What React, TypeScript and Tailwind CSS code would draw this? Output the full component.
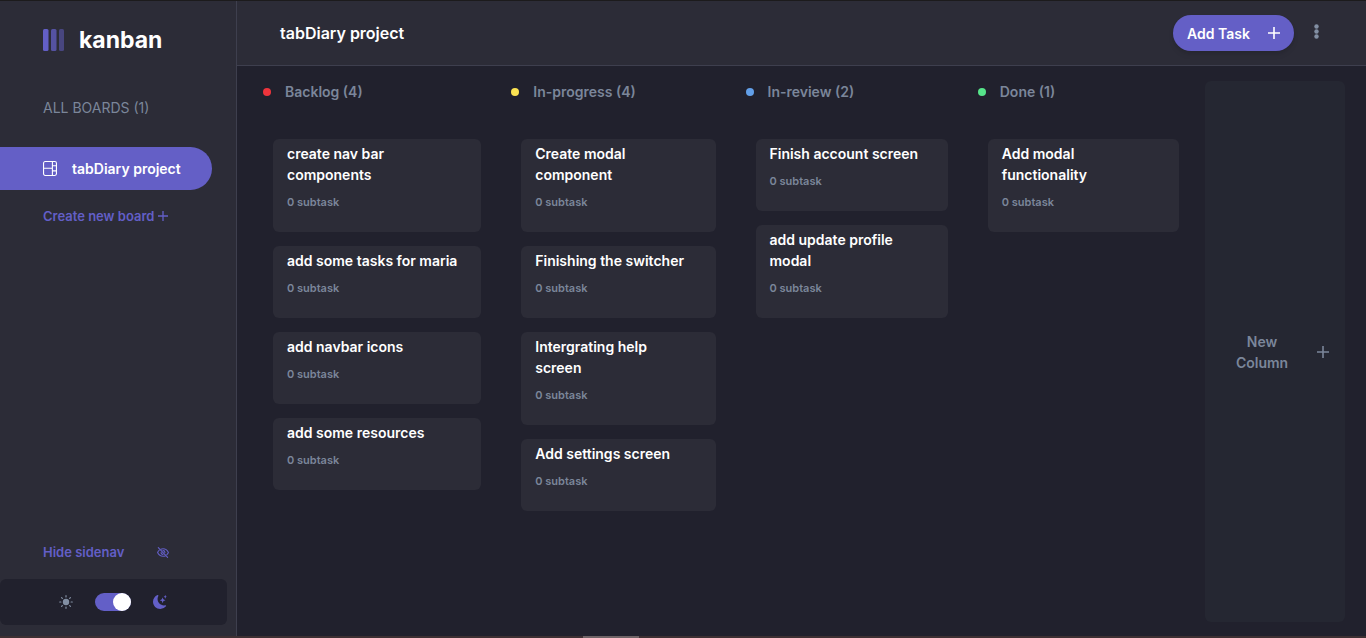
import { useState } from "react";
import { BsMoonStarsFill } from "react-icons/bs";

type Task = { title: string; subtasks: number };
type Column = { name: string; dot: string; tasks: Task[] };

const task = (title: string): Task => ({ title, subtasks: 0 });

const columns: Column[] = [
  {
    name: "Backlog",
    dot: "bg-[#ee343c]",
    tasks: [
      task("create nav bar components"),
      task("add some tasks for maria"),
      task("add navbar icons"),
      task("add some resources"),
    ],
  },
  {
    name: "In-progress",
    dot: "bg-[#fbe252]",
    tasks: [
      task("Create modal component"),
      task("Finishing the switcher"),
      task("Intergrating help screen"),
      task("Add settings screen"),
    ],
  },
  {
    name: "In-review",
    dot: "bg-[#629fe8]",
    tasks: [task("Finish account screen"), task("add update profile modal")],
  },
  { name: "Done", dot: "bg-[#56e48a]", tasks: [task("Add modal functionality")] },
];

function PlusIcon({ className }: { className: string }) {
  return (
    <svg viewBox="0 0 12 12" className={className} fill="currentColor" aria-hidden="true">
      <path d="M5.2 0h1.6v5.2H12v1.6H6.8V12H5.2V6.8H0V5.2h5.2z" />
    </svg>
  );
}

function BoardIcon() {
  return (
    <svg viewBox="0 0 14 15" className="h-[15px] w-[14px]" fill="none" stroke="currentColor" strokeWidth="1.1" aria-hidden="true">
      <rect x="0.55" y="0.55" width="12.9" height="13.9" rx="1.6" />
      <path d="M9.4 0.6v13.8M0.6 7.3h8.8M9.4 4.7h4M9.4 9.9h4" />
    </svg>
  );
}

function HideIcon() {
  return (
    <svg viewBox="0 0 12 11" className="h-[11px] w-3" fill="none" stroke="currentColor" strokeWidth="1.1" strokeLinecap="round" aria-hidden="true">
      <path d="M3.9 2.2C4.5 1.9 5.2 1.7 6 1.7c2.5 0 4.3 1.4 5.4 3.8-.4.9-.9 1.6-1.5 2.2M8.2 8.9c-.7.3-1.4.4-2.2.4C3.5 9.3 1.7 7.9.6 5.5c.4-1 1-1.8 1.7-2.4" />
      <path d="M6 3.6c1.1 0 1.9.8 1.9 1.9M5.9 7.4c-1.1 0-1.8-.8-1.8-1.8" />
      <path d="M1.3.7l9.3 9.6" />
    </svg>
  );
}

function SunIcon() {
  return (
    <svg viewBox="0 0 14 14" className="size-[14px]" aria-hidden="true">
      <circle cx="7" cy="7" r="3.2" fill="currentColor" />
      <path
        d="M7 .7v1.2M7 12.1v1.2M.7 7h1.2M12.1 7h1.2M2.55 2.55l.8.8M10.65 10.65l.8.8M2.55 11.45l.8-.8M10.65 3.35l.8-.8"
        stroke="currentColor"
        strokeWidth="1.2"
        strokeLinecap="round"
      />
    </svg>
  );
}

function DotsIcon() {
  return (
    <svg viewBox="0 0 5 15" className="h-[15px] w-[5px]" fill="currentColor" aria-hidden="true">
      <circle cx="2.5" cy="2.5" r="2.2" />
      <circle cx="2.5" cy="7.5" r="2.2" />
      <circle cx="2.5" cy="12.5" r="2.2" />
    </svg>
  );
}

function Sidebar() {
  const [dark, setDark] = useState(true);
  return (
    <aside className="flex w-[237px] shrink-0 flex-col border-r border-[#3e3f4e] bg-[#2c2c37]">
      <div className="flex items-center gap-[15px] pt-[21px] pl-[43px]">
        <svg viewBox="0 0 21 22" className="h-[22px] w-[21px]" fill="#635fc7" aria-hidden="true">
          <rect width="5.5" height="22" rx="1.5" />
          <rect x="8" width="5.5" height="22" rx="1.5" opacity="0.75" />
          <rect x="16" width="5" height="22" rx="1.5" opacity="0.5" />
        </svg>
        <span className="text-[23px] leading-9 font-bold text-white">kanban</span>
      </div>
      <h2 className="mt-[38px] pl-[43px] text-[14px] leading-6 text-[#7b869a]">ALL BOARDS (1)</h2>
      <nav className="mt-[27px] flex flex-col items-start">
        <a href="#board" className="flex h-[43px] w-[212px] items-center gap-[15px] rounded-r-full bg-[#645fc6] pl-[43px] text-[14px] leading-[21px] font-semibold text-white">
          <BoardIcon />
          tabDiary project
        </a>
        <button type="button" className="mt-4 ml-[43px] flex items-center gap-1 text-[13px] leading-5 font-semibold text-[#635fc7]">
          Create new board
          <PlusIcon className="size-[10px]" />
        </button>
      </nav>
      <button type="button" className="mt-auto ml-[43px] flex w-[126px] items-center justify-between text-[13px] leading-5 font-semibold text-[#635fc7]">
        Hide sidenav
        <HideIcon />
      </button>
      <div className="mt-[17px] mr-[9px] mb-[11px] flex h-[46px] items-center justify-center gap-[22px] rounded-md bg-[#21212d] pr-0.5 text-[#828fa3]">
        <SunIcon />
        <label className="flex">
          <input
            type="checkbox"
            role="switch"
            aria-label="Dark theme"
            checked={dark}
            onChange={() => setDark(!dark)}
            className="peer sr-only"
          />
          <span className="flex h-[18px] w-9 rounded-full bg-[#635fc7] peer-checked:justify-end">
            <span className="size-[18px] rounded-full bg-white" />
          </span>
        </label>
        <BsMoonStarsFill className="size-[14px] text-[#635fc7]" />
      </div>
    </aside>
  );
}

function Card({ title, subtasks }: Task) {
  return (
    <li className="rounded-md bg-[#2c2c37] pt-1 pr-[22px] pb-[21px] pl-[14px]">
      <h3 className="text-[14px] leading-[21px] font-semibold text-white">{title}</h3>
      <p className="mt-2 text-[11px] leading-[18px] font-semibold text-[#7b869a]">{subtasks} subtask</p>
    </li>
  );
}

export default function App() {
  return (
    <div className="flex min-h-screen flex-col border-t border-[#1c1b1c] bg-[#21212d] font-['Inter',sans-serif]">
      <div className="flex flex-1">
        <Sidebar />
        <div className="flex min-w-0 flex-1 flex-col">
          <header className="flex h-[65px] items-center border-b border-[#3e3f4e] bg-[#2c2c37] pr-[47px] pl-[43px]">
            <h1 className="mr-auto text-[16px] font-semibold text-white">tabDiary project</h1>
            <button type="button" className="flex h-9 w-[121px] items-center justify-between rounded-full bg-[#645fc6] px-[14px] text-[14px] leading-[21px] font-semibold text-white shadow-md">
              Add Task
              <PlusIcon className="size-3" />
            </button>
            <button type="button" aria-label="Board options" className="ml-5 pb-1 text-[#828fa3]">
              <DotsIcon />
            </button>
          </header>
          <main className="flex flex-1 pt-[15px] pr-[21px] pb-[14px] pl-[26px]">
            <div className="grid flex-1 grid-cols-[218fr_204fr_202fr_201fr] gap-[30px]">
              {columns.map((column) => (
                <section key={column.name}>
                  <h2 className="flex items-center gap-[14px] text-[14px] leading-[21px] font-semibold text-[#7b869a]">
                    <span className={`size-2 rounded-full ${column.dot}`} />
                    {column.name} ({column.tasks.length})
                  </h2>
                  <ul className="mt-[37px] ml-[10px] flex flex-col gap-[14px]">
                    {column.tasks.map((item) => (
                      <Card key={item.title} {...item} />
                    ))}
                  </ul>
                </section>
              ))}
            </div>
            <button type="button" className="ml-[26px] flex w-[140px] items-center justify-end gap-7 rounded-md bg-[#252732] pr-4 text-[14px] leading-[21px] font-semibold text-[#7b869a]">
              <span className="w-[54px]">New Column</span>
              <PlusIcon className="size-3" />
            </button>
          </main>
        </div>
      </div>
      <div className="flex h-[2px] justify-center bg-[#3e3033] pr-[144px]">
        <div className="w-14 bg-[#706467]" />
      </div>
    </div>
  );
}
